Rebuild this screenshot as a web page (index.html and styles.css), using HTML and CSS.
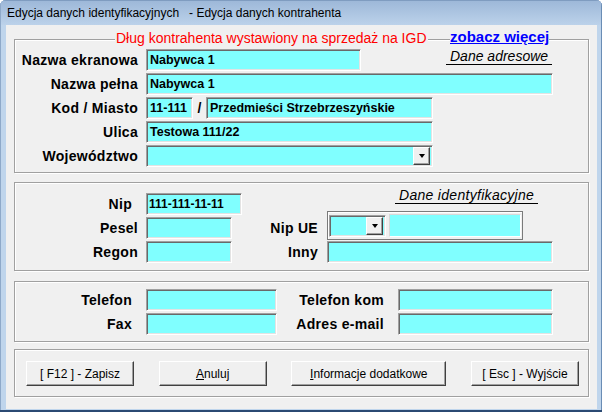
FILE: index.html
```html
<!DOCTYPE html>
<html lang="pl">
<head>
<meta charset="utf-8">
<title>Edycja danych identyfikacyjnych</title>
<link rel="stylesheet" href="styles.css">
</head>
<body>
<div class="window">
  <header class="titlebar">Edycja danych identyfikacyjnych   - Edycja danych kontrahenta</header>
  <main class="client">
    <section class="group g1">
      <span class="legend">Dług kontrahenta wystawiony na sprzedaż na IGD</span>
      <a class="more" href="#">zobacz więcej</a>
      <div class="grid g1-grid">
        <span class="lbl">Nazwa ekranowa</span>
        <div class="row">
          <span class="input w215">Nabywca 1</span>
          <span class="caption cap-addr">Dane adresowe</span>
        </div>
        <span class="lbl">Nazwa pełna</span>
        <div class="row"><span class="input w407">Nabywca 1</span></div>
        <span class="lbl">Kod / Miasto</span>
        <div class="row">
          <span class="input w47">11-111</span>
          <span class="slash">/</span>
          <span class="input w227">Przedmieści Strzebrzeszyńskie</span>
        </div>
        <span class="lbl">Ulica</span>
        <div class="row"><span class="input w287">Testowa 111/22</span></div>
        <span class="lbl">Województwo</span>
        <div class="row"><span class="input combo w287"><span class="drop"><span class="tri"></span></span></span></div>
      </div>
    </section>

    <section class="group g2">
      <div class="grid g2-grid">
        <span class="lbl pr6">Nip</span>
        <span class="input w96 nip">111-111-11-11</span>
        <span></span>
        <span class="caption cap-id">Dane identyfikacyjne</span>

        <span class="lbl">Pesel</span>
        <span class="input w86"></span>
        <span class="lbl">Nip UE</span>
        <div class="nipue">
          <span class="input combo small"><span class="drop"><span class="tri"></span></span></span>
          <span class="input plain"></span>
        </div>

        <span class="lbl">Regon</span>
        <span class="input w86"></span>
        <span class="lbl">Inny</span>
        <span class="input w226 ml1"></span>
      </div>
    </section>

    <section class="group g3">
      <div class="grid g3-grid">
        <span class="lbl pr6">Telefon</span>
        <span class="input"></span>
        <span class="lbl pr6">Telefon kom</span>
        <span class="input"></span>
        <span class="lbl pr6">Fax</span>
        <span class="input"></span>
        <span class="lbl pr6">Adres e-mail</span>
        <span class="input"></span>
      </div>
    </section>

    <section class="group g4">
      <button class="btn">[ F12 ] - Zapisz</button>
      <button class="btn"><u>A</u>nuluj</button>
      <button class="btn wide"><u>I</u>nformacje dodatkowe</button>
      <button class="btn">[ Esc ] - Wyjście</button>
    </section>
  </main>
</div>
</body>
</html>
```

FILE: styles.css
```css
* { box-sizing: border-box; }
html, body { margin: 0; padding: 0; }
body {
  width: 602px;
  height: 412px;
  overflow: hidden;
  background: #ffffff;
  font-family: "Liberation Sans", Arial, sans-serif;
}

.window {
  width: 602px;
  height: 412px;
  display: flex;
  flex-direction: column;
  background: #bfd5ec;
  border-radius: 6px 6px 0 0;
  border-bottom: 2px solid #2b4a73;
  box-shadow: inset 0 1px 0 #7f9cc0, inset 1px 0 0 #8ea9c9, inset -1px 0 0 #6a8db5;
  overflow: hidden;
}

.titlebar {
  flex: none;
  height: 25px;
  padding: 6px 0 0 7px;
  font-size: 12px;
  line-height: 14px;
  white-space: pre;
  color: #000;
  background: linear-gradient(#9cb7d8, #bcd2ea);
  box-shadow: inset 0 1px 0 #7f9cc0, inset 1px 0 0 #8ea9c9, inset -1px 0 0 #6a8db5;
}

.client {
  flex: 1;
  margin: 0 5px 1px 6px;
  background: #f0f0f0;
  display: flex;
  flex-direction: column;
  padding: 14px 8px 0 8px;
}

.group {
  position: relative;
  flex: none;
  border: 1px solid #a0a0a0;
  box-shadow: inset 1px 1px 0 #fff, 1px 1px 0 #fff;
}
.g1 { height: 134px; padding-top: 9px; }
.g2 { height: 89px; margin-top: 9px; padding-top: 10px; }
.g3 { height: 61px; margin-top: 10px; padding-top: 7px; }
.g4 {
  height: 48px;
  margin-top: 7px;
  padding: 11px 9px 0 11px;
  display: flex;
  justify-content: space-between;
  align-items: flex-start;
}

.legend {
  position: absolute;
  top: -10px;
  left: 100px;
  padding: 0 1px;
  background: #f0f0f0;
  color: #ff0000;
  font-size: 14px;
  line-height: 16px;
  white-space: nowrap;
}
.more {
  position: absolute;
  top: -12px;
  left: 435px;
  background: #f0f0f0;
  color: #0000ff;
  font-size: 15px;
  font-weight: bold;
  line-height: 17px;
  text-decoration: underline;
  white-space: nowrap;
}

.grid {
  display: grid;
  grid-auto-rows: 22px;
  row-gap: 2px;
  column-gap: 8px;
}
.g1-grid { grid-template-columns: 123px 1fr; }
.g2-grid { grid-template-columns: 123px 104px 60px 227px; }
.g3-grid { grid-template-columns: 123px 131px 105px 155px; }

.lbl {
  display: flex;
  align-items: center;
  justify-content: flex-end;
  font-size: 14px;
  font-weight: bold;
  letter-spacing: 0.3px;
  color: #000;
  white-space: nowrap;
}
.pr6 { padding-right: 6px; }

.row {
  display: flex;
  align-items: flex-start;
}

.input {
  display: flex;
  align-items: center;
  height: 22px;
  padding-left: 3px;
  background: #80ffff;
  border: 1px solid;
  border-color: #a0a0a0 #ffffff #ffffff #a0a0a0;
  box-shadow: inset 1px 1px 0 #696969, inset -1px -1px 0 #e3e3e3;
  font-size: 12.5px;
  font-weight: bold;
  color: #000;
  white-space: nowrap;
  overflow: hidden;
}
.w47 { width: 47px; }
.w86 { width: 86px; }
.w96 { width: 96px; }
.w215 { width: 215px; }
.w226 { width: 226px; }
.w227 { width: 227px; }
.w287 { width: 287px; }
.w407 { width: 407px; }
.ml1 { margin-left: 1px; }
.nip { padding-left: 2px; font-size: 12px; }

.slash {
  width: 13px;
  text-align: center;
  font-size: 14px;
  font-weight: bold;
  line-height: 22px;
}

.caption {
  font-size: 14px;
  font-style: italic;
  line-height: 15px;
  color: #000;
  border-bottom: 1px solid #000;
  padding: 0 4px;
  white-space: nowrap;
}
.cap-addr { margin-left: 85px; }
.cap-id {
  justify-self: start;
  align-self: start;
  margin: -5px 0 0 69px;
  letter-spacing: 0.3px;
}

.combo {
  justify-content: flex-end;
  padding: 0 2px 0 0;
}
.drop {
  width: 17px;
  height: 18px;
  background: #f0f0f0;
  border: 1px solid;
  border-color: #ffffff #404040 #404040 #ffffff;
  box-shadow: inset -1px -1px 0 #a0a0a0;
  display: flex;
  align-items: center;
  justify-content: center;
}
.tri {
  width: 0;
  height: 0;
  border-left: 3.5px solid transparent;
  border-right: 3.5px solid transparent;
  border-top: 4px solid #000;
}

.nipue {
  width: 196px;
  height: 29px;
  margin: 0 0 -1px 1px;
  align-self: end;
  display: flex;
  align-items: center;
  gap: 3px;
  padding: 0 1px;
  border: 1px solid #7a7a7a;
  box-shadow: inset 1px 1px 0 #fff;
  background: #f0f0f0;
}
.combo.small { width: 57px; height: 22px; }
.input.plain {
  flex: 1;
  height: 23px;
  border-color: #d8d8d8 #ffffff #ffffff #d8d8d8;
  box-shadow: none;
}

.btn {
  width: 108px;
  height: 25px;
  padding: 0;
  margin: 0;
  background: #f0f0f0;
  border: 1px solid;
  border-color: #ffffff #404040 #404040 #ffffff;
  box-shadow: inset -1px -1px 0 #a0a0a0;
  font-family: "Liberation Sans", Arial, sans-serif;
  font-size: 12px;
  color: #000;
  display: flex;
  align-items: center;
  justify-content: center;
  white-space: nowrap;
}
.btn.wide { width: 155px; }
```
